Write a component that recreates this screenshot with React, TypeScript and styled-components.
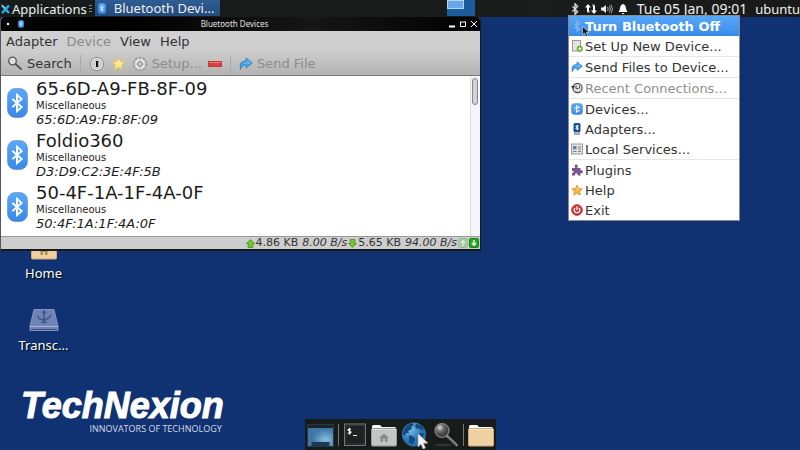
import React from "react";
import styled, { createGlobalStyle, css } from "styled-components";

const SANS = '"DejaVu Sans", Verdana, sans-serif';
const PANEL = '"Noto Sans", "Open Sans", sans-serif';

const GlobalStyle = createGlobalStyle`
  * { box-sizing: border-box; }
  body { margin: 0; background: #103272; font-family: ${SANS}; }
  button { font: inherit; color: inherit; background: none; border: 0; padding: 0; margin: 0; }
`;

const Screen = styled.div`
  position: relative;
  display: flex;
  flex-direction: column;
  min-height: 100vh;
  overflow: hidden;
  background: #103272;
`;

/* ---------- top panel ---------- */

const Panel = styled.header`
  display: flex;
  align-items: center;
  height: 17px;
  background: linear-gradient(to right, #171c1a, #181d1b 60%, #1a1a1a);
  color: #f0f0f0;
  font: 13px/16px ${PANEL};
  white-space: nowrap;
`;

const AppsButton = styled.button`
  display: flex;
  align-items: center;
  gap: 2px;
  padding-left: 1px;
`;

const Grip = styled.span`
  width: 3px;
  height: 7px;
  margin: 0 3px 0 2px;
  background: repeating-linear-gradient(#888d8b 0 1px, transparent 1px 3px);
`;

const TaskButton = styled.button`
  display: flex;
  align-items: center;
  gap: 8px;
  width: 125px;
  height: 16px;
  padding-left: 3px;
  margin-bottom: 1px;
  background: linear-gradient(#2f5d94, #234a7c);
`;

const PanelSpace = styled.div`
  flex: 1;
`;

const Pager = styled.button`
  width: 28px;
  height: 16px;
  margin: 0 94px 1px 0;
  background: #1c5c9c;
`;

const PagerWindow = styled.span`
  display: block;
  width: 17px;
  height: 9px;
  margin-bottom: 7px;
  border: 1px solid #b5d5f4;
  background: #68a7ea;
`;

const Tray = styled.div`
  display: flex;
  align-items: center;
  gap: 4px;
  margin-right: 8px;
`;

const TrayButton = styled.button`
  display: flex;
  width: 12px;
  height: 12px;
`;

const Clock = styled.button`
  margin-right: 8px;
  font-size: 14px;
`;

/* ---------- device window ---------- */

const Window = styled.section`
  position: absolute;
  z-index: 1;
  top: 17px;
  left: 0;
  width: calc(60% + 1px);
  border: solid #171c1a;
  border-width: 0 1px 2px;
  border-left-color: #555;
  border-radius: 4px 4px 0 0;
  background: #cdcdcd;
  color: #333;
  font-size: 12px;
  overflow: hidden;
`;

const TitleBar = styled.div`
  display: flex;
  align-items: center;
  justify-content: space-between;
  height: 14px;
  padding: 0 2px 0 6px;
  background: linear-gradient(to right, #050505, #000 25%, #161616 65%, #000);
  color: #e4e4e4;
  font: 8px/12px ${PANEL};
`;

const Title = styled.span`
  margin-right: 16px;
`;

const TitleSide = styled.div<{ $end?: boolean }>`
  flex: 1;
  display: flex;
  align-items: center;
  gap: ${(p) => (p.$end ? "3px" : "9px")};
  justify-content: ${(p) => (p.$end ? "flex-end" : "flex-start")};
`;

const TitleDot = styled.span`
  width: 2px;
  height: 2px;
  background: #fff;
`;

const WindowButton = styled.button`
  display: flex;
  width: 8px;
  height: 8px;
`;

const Chrome = styled.div`
  background: linear-gradient(#d0d0d0, #cdcdcd 45%, #b4b3b4);
  border-bottom: 1px solid #777;
`;

const MenuBar = styled.nav`
  display: flex;
  align-items: center;
  gap: 9px;
  height: 21px;
  padding-left: 5px;
  font-size: 13px;
`;

const BarButton = styled.button<{ $muted?: boolean }>`
  display: flex;
  align-items: center;
  gap: 4px;
  color: ${(p) => (p.$muted ? "#8b8b8b" : "#333")};
`;

const ToolBar = styled.div`
  display: flex;
  align-items: center;
  height: 23px;
  padding-left: 6px;
  gap: 6px;
  font-size: 13px;
`;

const ToolDivider = styled.span`
  width: 1px;
  height: 18px;
  margin: 0 2px;
  background: #aaa;
`;

const Viewport = styled.div`
  display: flex;
  background: #fff;
`;

const DeviceList = styled.ul`
  flex: 1;
  margin: 0;
  padding: 1px 0 3px;
  list-style: none;
`;

const Device = styled.li`
  display: flex;
  align-items: center;
  gap: 8px;
  height: 52px;
  padding-left: 6px;
  color: #1c1c1c;
`;

const DeviceName = styled.div`
  font-size: 18px;
  line-height: 20px;
`;

const DeviceKind = styled.div`
  font-size: 10px;
  line-height: 14px;
`;

const DeviceAddress = styled.div`
  font-size: 13px;
  line-height: 14px;
  font-style: italic;
`;

const ScrollTrack = styled.div`
  width: 10px;
  padding: 2px 1px;
  border-left: 1px solid #ddd;
  background: #f7f5f7;
`;

const ScrollThumb = styled.div`
  width: 6px;
  height: 27px;
  border: 1px solid #888;
  border-radius: 3px;
  background: #d3d3d3;
`;

const StatusBar = styled.footer`
  display: flex;
  align-items: center;
  justify-content: flex-end;
  gap: 1px;
  height: 13px;
  padding-right: 1px;
  border-top: 1px solid #999;
  background: #cdcdcd;
  font-size: 11px;
  line-height: 12px;
  white-space: nowrap;
`;

const Rate = styled.em`
  margin-left: 3px;
`;

/* ---------- bluetooth menu ---------- */

const Popup = styled.div`
  position: absolute;
  z-index: 2;
  top: 15px;
  right: 60px;
  width: 172px;
  border: 1px solid #8a8a8a;
  background: #fff;
  color: #333;
  font-size: 13px;
`;

const MenuItem = styled.button<{ $rule?: boolean; $active?: boolean }>`
  position: relative;
  display: flex;
  align-items: center;
  gap: 2px;
  width: 100%;
  height: ${(p) => (p.$rule ? "21px" : "20px")};
  padding-left: 2px;
  border-bottom: ${(p) => (p.$rule ? "1px solid #e6e6e6" : "0")};
  white-space: nowrap;
  &:disabled { color: #8f8f8f; }
  ${(p) =>
    p.$active &&
    css`
      background: linear-gradient(#57a8f8, #3a8be8);
      color: #fff;
      font-weight: bold;
    `}
`;

const Pointer = styled.svg`
  position: absolute;
  left: 13px;
  top: 10px;
`;

/* ---------- desktop ---------- */

const Desktop = styled.main`
  flex: 1;
  display: flex;
  flex-direction: column;
  align-items: flex-start;
  gap: 26px;
  padding: 219px 0 0 7px;
`;

const Shortcut = styled.button`
  display: flex;
  flex-direction: column;
  align-items: center;
  gap: 4px;
  width: 73px;
  color: #fff;
  font: 13px/18px ${PANEL};
  text-shadow: 1px 1px 1px #000;
`;

const Bottom = styled.footer`
  display: grid;
  grid-template-columns: 1fr auto 1fr;
  align-items: end;
`;

const Brand = styled.div`
  justify-self: start;
  padding: 0 0 15px 21px;
  color: #fff;
  text-align: right;
`;

const BrandName = styled.div`
  font: italic bold 36px/34px "Liberation Sans", Arial, sans-serif;
  -webkit-text-stroke: 1px #fff;
`;

const BrandLine = styled.div`
  padding-right: 2px;
  color: #d5dceb;
  font: 9px/12px "Open Sans", sans-serif;
`;

const Dock = styled.nav`
  display: flex;
  align-items: center;
  gap: 4px;
  height: 31px;
  padding: 0 2px;
  background: #171c1a;
`;

const DockButton = styled.button`
  display: flex;
`;

const DockDivider = styled.span`
  width: 1px;
  height: 22px;
  background: #777;
`;

/* ---------- drawings ---------- */

const RUNE = "M-3.5 -3.5 L3.5 3.5 L0 7 V-7 L3.5 -3.5 L-3.5 3.5";

function Badge({ w, h, id }: { w: number; h: number; id: string }) {
  return (
    <svg width={w} height={h} viewBox="0 0 22 30" preserveAspectRatio="none">
      <defs>
        <linearGradient id={id} x2="0" y2="1">
          <stop offset="0" stopColor="#5aa9fa" />
          <stop offset="1" stopColor="#3788ea" />
        </linearGradient>
      </defs>
      <rect x=".5" y=".5" width="21" height="29" rx="8" fill={`url(#${id})`} stroke="#6c8fbd" strokeWidth=".7" />
      <path transform="translate(10.5 15) scale(1.4 1.15)" d={RUNE} fill="none" stroke="#fff" strokeWidth="1.5" />
    </svg>
  );
}

const Rune = ({ color, size }: { color: string; size: number }) => (
  <svg width={size} height={size} viewBox="-8 -8 16 16">
    <path d={RUNE} fill="none" stroke={color} strokeWidth="1.8" />
  </svg>
);

const XLogo = () => (
  <svg width="9" height="12" viewBox="0 0 9 12">
    <path d="M1 2.500 8 10M8 2.500 1 10" fill="none" stroke="#25b0ee" strokeWidth="2.400" />
    <path d="M.5 1.500 4 5.500" stroke="#d6f2ff" strokeWidth=".8" />
  </svg>
);

const Network = () => (
  <svg width="12" height="12" viewBox="0 0 12 12" fill="#fff">
    <path d="M3 1 6 4.500H4V8.500H2V4.500H0ZM9 11 6 7.500H8V3H10V7.500H12Z" />
    <path d="M2 8h3v1.500H2ZM7 3h3V1.500H7Z" opacity=".6" />
  </svg>
);

const Speaker = () => (
  <svg width="12" height="12" viewBox="0 0 12 12">
    <path d="M0 4.500h2L5 2v8L2 7.500H0Z" fill="#eee" />
    <path d="M6.500 4Q8 6 6.500 8M8.300 2.700Q10.500 6 8.300 9.300M10 1.500Q13 6 10 10.500" fill="none" stroke="#aaa" />
  </svg>
);

const Bell = () => (
  <svg width="12" height="12" viewBox="0 0 12 12" fill="#fff">
    <path d="M6 1Q8.500 1.500 9 5 9 7 10.500 9H1.500Q3 7 3 5 3.500 1.500 6 1ZM4.500 10h3L6 11.500Z" />
  </svg>
);

const Magnifier = () => (
  <svg width="16" height="15" viewBox="0 0 16 15">
    <path d="M8.500 8 14 13" stroke="#555" strokeWidth="2" strokeLinecap="round" />
    <circle cx="5.500" cy="5" r="3.800" fill="#dedede" stroke="#555" strokeWidth="1.300" />
  </svg>
);

const Info = () => (
  <svg width="16" height="16" viewBox="0 0 16 16">
    <circle cx="8" cy="8" r="6.500" fill="#f6f6f6" stroke="#777" strokeWidth=".9" />
    <circle cx="8" cy="8" r="4.500" fill="#d5d5d5" stroke="#999" strokeWidth=".6" />
    <path d="M7 5h2.200v6H7Z" fill="#111" />
  </svg>
);

const Star = ({ size, light }: { size: number; light?: boolean }) => (
  <svg width={size} height={size} viewBox="0 0 16 16">
    <path
      d="M8 1.500 10 6 15 6.500 11.300 9.900 12.500 14.500 8 12 3.500 14.500 4.700 9.900 1 6.500 6 6Z"
      fill={light ? "#fbe782" : "#f9b937"}
      stroke={light ? "#e3c35b" : "#c98621"}
      strokeLinejoin="round"
    />
    <path d="M8 3 9.300 7 12.500 7.500 8 8.500Z" fill="#fff" opacity=".5" />
  </svg>
);

const Gear = () => (
  <svg width="16" height="16" viewBox="0 0 16 16">
    <circle cx="8" cy="8" r="6.300" fill="none" stroke="#999" strokeWidth="2" strokeDasharray="2.500 1.458" />
    <circle cx="8" cy="8" r="5.500" fill="#ececec" stroke="#bbb" strokeWidth=".8" />
    <circle cx="8" cy="8" r="2.600" fill="#c4c4c4" stroke="#8f8f8f" />
    <path d="M8 3v2M8 11v2M3 8h2M11 8h2" stroke="#bbb" />
  </svg>
);

const Minus = () => (
  <svg width="14" height="8" viewBox="0 0 14 8">
    <rect x=".5" y="1.500" width="13" height="5" fill="#e14040" stroke="#c33838" />
    <path d="M1 2.500h12" stroke="#f07a7a" />
  </svg>
);

const Share = ({ size }: { size: number }) => (
  <svg width={size} height={size} viewBox="0 0 14 14">
    <path d="M1.500 12.500Q-.5 4 7 4V1L13.300 6 7 11V8.300Q3 8 1.500 12.500Z" fill="#41a3ea" stroke="#2474ad" strokeWidth=".7" />
    <path d="M8.500 3.800 11 6H5" fill="none" stroke="#8accfa" strokeWidth=".8" />
  </svg>
);

const Arrow = ({ down }: { down?: boolean }) => (
  <svg width="9" height="9" viewBox="0 0 9 9">
    <path
      transform={down ? "rotate(180 4.5 4.5)" : undefined}
      d="M4.500 .5 8.500 4.500H6.800V8.500H2.200V4.500H.5Z"
      fill="#71c72c"
      stroke="#46901a"
      strokeWidth=".8"
    />
  </svg>
);

const Light = ({ on }: { on?: boolean }) => (
  <svg width="10" height="10" viewBox="0 0 10 10">
    <rect x=".5" y=".5" width="9" height="9" rx="1.500" fill={on ? "#27a824" : "#a9c9a6"} stroke={on ? "#168114" : "#9fb99d"} />
    <path d={on ? "M5 2v5M3 5 5 7.300 7 5" : "M5 8V3M3 5 5 2.700 7 5"} fill="none" stroke={on ? "#fff" : "#dbe8da"} strokeWidth="1.300" />
  </svg>
);

const MenuGlyph = ({ children }: { children: React.ReactNode }) => (
  <svg width="12" height="12" viewBox="0 0 12 12">
    {children}
  </svg>
);

const NewDevice = () => (
  <MenuGlyph>
    <rect x="1.500" y=".5" width="8" height="10.500" fill="#e2e2e2" stroke="#999" />
    <circle cx="8.800" cy="8.800" r="3" fill="#55ad20" />
    <path d="M8.800 7v3.600M7 8.800h3.600" stroke="#fff" strokeWidth="1" />
  </MenuGlyph>
);

const History = () => (
  <MenuGlyph>
    <circle cx="6.500" cy="6" r="4.600" fill="#ddd" stroke="#444" strokeWidth="1.100" />
    <path d="M5 3.500v3h2.500M8.500 3.500v3" fill="none" stroke="#444" strokeWidth=".9" />
    <path d="M0 4h4L2 7Z" fill="#333" />
  </MenuGlyph>
);

const Dongle = () => (
  <MenuGlyph>
    <rect x="3.500" y="8" width="5" height="3.500" fill="#bbb" stroke="#777" strokeWidth=".6" />
    <rect x="2.500" y="0" width="7" height="9" rx="1.500" fill="#1550a0" />
    <path d="M4.500 3 7.500 6 6 7V2L7.500 3 4.500 6" fill="none" stroke="#fff" strokeWidth="1" />
  </MenuGlyph>
);

const Services = () => (
  <MenuGlyph>
    <rect x=".5" y="1" width="11" height="10" fill="#e4e4e4" stroke="#999" />
    <path d="M2 3h3.500v3.500H2Z" fill="#5d86b5" />
    <path d="M2 8.500h3.500M7 4h3M7 6h3M7 8.500h3" stroke="#7c8088" />
  </MenuGlyph>
);

const Puzzle = () => (
  <MenuGlyph>
    <path d="M1 4H4.300Q2.800 1 5.200.6 7.600 1 6.300 4H9.500V6.500Q12 5.500 12 7.700 11.800 9.800 9.500 8.900V11.500H6.800Q7 9.300 5.200 9.200 3.500 9.500 3.900 11.500H1V9Q3 8.700 2.700 7.600 2.500 6.500 1 6.900Z" fill="#7d5292" />
  </MenuGlyph>
);

const Power = () => (
  <MenuGlyph>
    <circle cx="6" cy="6" r="5.300" fill="#d5303a" stroke="#b0323a" />
    <path d="M4 3.800Q2.300 6 4 8 6 9.500 8 8 9.700 6 8 3.800M6 2.300V6" fill="none" stroke="#fff" strokeWidth="1.200" />
  </MenuGlyph>
);

const Folder = ({ tan, house }: { tan?: boolean; house?: boolean }) => (
  <svg width="26" height="24" viewBox="0 0 26 24">
    <path d="M1 6V3.500Q1 2 2.500 2H9L11 4H24.500V8H1Z" fill={tan ? "#fff" : "#f4f4f4"} />
    <rect x=".5" y="5.500" width="25" height="17.500" rx="1" fill={tan ? "#efd0a0" : "#c4c4c4"} stroke={tan ? "#c9a97b" : "#999"} />
    <path d="M1 6.500H25" stroke={tan ? "#f9e8cd" : "#ddd"} />
    {house && <path d="M13 10.500 18 15H16.500V19H14V16H12V19H9.500V15H8Z" fill={tan ? "#b08c57" : "#8b8b8b"} />}
  </svg>
);

const Drive = () => (
  <svg width="30" height="24" viewBox="0 0 30 24">
    <path d="M5 1.500H25L29 18V22.500H1V18Z" fill="#6f83b4" stroke="#8fa0c8" strokeWidth=".8" />
    <path d="M1 18.500H29" stroke="#a9b7d6" />
    <path d="M2 21.500H28" stroke="#3e5284" />
    <path d="M15 3.500V15M8.500 7.500 10 10.500 15 12.500 20 9.500 22 7M12.500 14.500H17.500M13.500 5 15 3 16.500 5" fill="none" stroke="#3c5286" strokeWidth="1.300" />
  </svg>
);

const ShowDesktop = () => (
  <svg width="27" height="24" viewBox="0 0 27 24">
    <defs>
      <radialGradient id="desk" cx=".7" cy=".7">
        <stop offset="0" stopColor="#86bfdd" />
        <stop offset="1" stopColor="#3f78a3" />
      </radialGradient>
    </defs>
    <rect x=".5" y="1.500" width="26" height="22" fill="url(#desk)" stroke="#243746" />
    <rect x="1" y="2" width="25" height="3" fill="#1b242b" />
    <path d="M4.500 19H22.500V23.500H4.500Z" fill="#1d3b50" />
  </svg>
);

const Terminal = () => (
  <svg width="24" height="24" viewBox="0 0 24 24">
    <rect x="1.500" y="1" width="21" height="21.500" fill="#1f2122" stroke="#777" />
    <rect x="3" y="2.500" width="18" height="18.500" fill="none" stroke="#333" />
    <path d="M8 6.500Q5 5.500 5 7.300L8 9Q8 10.800 4.700 10M6.500 4.800V11.500M10 12.500H14" fill="none" stroke="#fff" strokeWidth="1.100" />
  </svg>
);

const Globe = () => (
  <svg width="28" height="28" viewBox="0 0 28 28">
    <defs>
      <radialGradient id="sea" cx=".35" cy=".3">
        <stop offset="0" stopColor="#7dbdea" />
        <stop offset="1" stopColor="#2470b2" />
      </radialGradient>
    </defs>
    <circle cx="13" cy="13.500" r="12" fill="url(#sea)" />
    <path d="M3 8Q6 3 11 2L13 4 10 6 11 8 7 10 8 12 5 12 4 15 1.500 13ZM15 3 20 4 23 8 20 9 18 7 16 8 14 6ZM8 14 13 16 14 19 11 24 8 21ZM18 12 23 12 22 16 18 16Z" fill="#154a7e" />
    <path d="M17 12.500V26L20 23.200 22 28 24.500 27 22.500 22.200H27Z" fill="#f1f1f1" stroke="#999" strokeWidth=".6" />
  </svg>
);

const Finder = () => (
  <svg width="26" height="26" viewBox="0 0 26 26">
    <defs>
      <radialGradient id="lens" cx=".35" cy=".3">
        <stop offset="0" stopColor="#ddd" />
        <stop offset=".5" stopColor="#777" />
        <stop offset="1" stopColor="#444" />
      </radialGradient>
    </defs>
    <ellipse cx="10" cy="23" rx="9" ry="1.500" fill="#303433" />
    <path d="M14 14 23.500 23" stroke="#888" strokeWidth="2.600" strokeLinecap="round" />
    <path d="M15 16 23 23.500" stroke="#4a4a4a" />
    <circle cx="9" cy="8.500" r="7" fill="url(#lens)" stroke="#888" strokeWidth="1.200" />
  </svg>
);

/* ---------- data ---------- */

const devices = [
  ["65-6D-A9-FB-8F-09", "65:6D:A9:FB:8F:09"],
  ["Foldio360", "D3:D9:C2:3E:4F:5B"],
  ["50-4F-1A-1F-4A-0F", "50:4F:1A:1F:4A:0F"],
];

type Entry = { label: string; icon: React.ReactNode; rule?: boolean; disabled?: boolean };

const entries: Entry[] = [
  { label: "Set Up New Device...", icon: <NewDevice />, rule: true },
  { label: "Send Files to Device...", icon: <Share size={12} />, rule: true },
  { label: "Recent Connections...", icon: <History />, rule: true, disabled: true },
  { label: "Devices...", icon: <Badge w={12} h={12} id="badge-menu" /> },
  { label: "Adapters...", icon: <Dongle /> },
  { label: "Local Services...", icon: <Services />, rule: true },
  { label: "Plugins", icon: <Puzzle /> },
  { label: "Help", icon: <Star size={12} /> },
  { label: "Exit", icon: <Power /> },
];

export default function App() {
  return (
    <Screen>
      <GlobalStyle />
      <Panel>
        <AppsButton><XLogo />Applications</AppsButton>
        <Grip />
        <TaskButton><Badge w={8} h={11} id="badge-task" />Bluetooth Devi...</TaskButton>
        <PanelSpace />
        <Pager aria-label="Workspace"><PagerWindow /></Pager>
        <Tray>
          <TrayButton aria-label="Bluetooth"><Rune color="#ddd" size={12} /></TrayButton>
          <TrayButton aria-label="Network"><Network /></TrayButton>
          <TrayButton aria-label="Volume"><Speaker /></TrayButton>
          <TrayButton aria-label="Notifications"><Bell /></TrayButton>
        </Tray>
        <Clock>Tue 05 Jan, 09:01</Clock>
        <button>ubuntu</button>
      </Panel>

      <Window>
        <TitleBar>
          <TitleSide><TitleDot /><Badge w={6} h={8} id="badge-title" /></TitleSide>
          <Title>Bluetooth Devices</Title>
          <TitleSide $end>
            <WindowButton aria-label="Minimize"><svg width="8" height="8"><path d="M1 6.500h6" stroke="#fff" strokeWidth="2" /></svg></WindowButton>
            <WindowButton aria-label="Maximize"><svg width="8" height="8"><path d="M1.500 2v4.500h5V2M1 2h6" fill="none" stroke="#fff" /></svg></WindowButton>
            <WindowButton aria-label="Close"><svg width="8" height="8"><path d="M1 1 7 7M7 1 1 7" stroke="#fff" /></svg></WindowButton>
          </TitleSide>
        </TitleBar>
        <Chrome>
          <MenuBar>
            <BarButton>Adapter</BarButton>
            <BarButton $muted disabled>Device</BarButton>
            <BarButton>View</BarButton>
            <BarButton>Help</BarButton>
          </MenuBar>
          <ToolBar>
            <BarButton><Magnifier />Search</BarButton>
            <ToolDivider />
            <BarButton aria-label="Info"><Info /></BarButton>
            <BarButton aria-label="Trust"><Star size={15} light /></BarButton>
            <BarButton $muted disabled><Gear />Setup...</BarButton>
            <BarButton aria-label="Remove"><Minus /></BarButton>
            <ToolDivider />
            <BarButton $muted disabled><Share size={14} />Send File</BarButton>
          </ToolBar>
        </Chrome>
        <Viewport>
          <DeviceList>
            {devices.map(([name, address], i) => (
              <Device key={address}>
                <Badge w={21} h={30} id={`badge-${i}`} />
                <div>
                  <DeviceName>{name}</DeviceName>
                  <DeviceKind>Miscellaneous</DeviceKind>
                  <DeviceAddress>{address}</DeviceAddress>
                </div>
              </Device>
            ))}
          </DeviceList>
          <ScrollTrack><ScrollThumb /></ScrollTrack>
        </Viewport>
        <StatusBar>
          <Arrow />4.86 KB<Rate>8.00 B/s</Rate>
          <Arrow down />5.65 KB<Rate>94.00 B/s</Rate>
          <Light /><Light on />
        </StatusBar>
      </Window>

      <Popup>
        <MenuItem $active>
          <Rune color="#86b3e6" size={12} />Turn Bluetooth Off
          <Pointer width="8" height="11" viewBox="0 0 8 11">
            <path d="M.5 .5V8.500L2.500 7 4 10.500 5.500 9.800 4.200 6.500H7Z" fill="#111" stroke="#fff" strokeWidth=".5" />
          </Pointer>
        </MenuItem>
        {entries.map((e) => (
          <MenuItem key={e.label} $rule={e.rule} disabled={e.disabled}>{e.icon}{e.label}</MenuItem>
        ))}
      </Popup>

      <Desktop>
        <Shortcut><Folder tan house />Home</Shortcut>
        <Shortcut><Drive />Transc...</Shortcut>
      </Desktop>

      <Bottom>
        <Brand>
          <BrandName>TechNexion</BrandName>
          <BrandLine>INNOVATORS OF TECHNOLOGY</BrandLine>
        </Brand>
        <Dock>
          <DockButton aria-label="Show desktop"><ShowDesktop /></DockButton>
          <DockDivider />
          <DockButton aria-label="Terminal"><Terminal /></DockButton>
          <DockButton aria-label="Files"><Folder house /></DockButton>
          <DockButton aria-label="Web browser"><Globe /></DockButton>
          <DockButton aria-label="Find"><Finder /></DockButton>
          <DockDivider />
          <DockButton aria-label="Folder"><Folder tan /></DockButton>
        </Dock>
      </Bottom>
    </Screen>
  );
}
